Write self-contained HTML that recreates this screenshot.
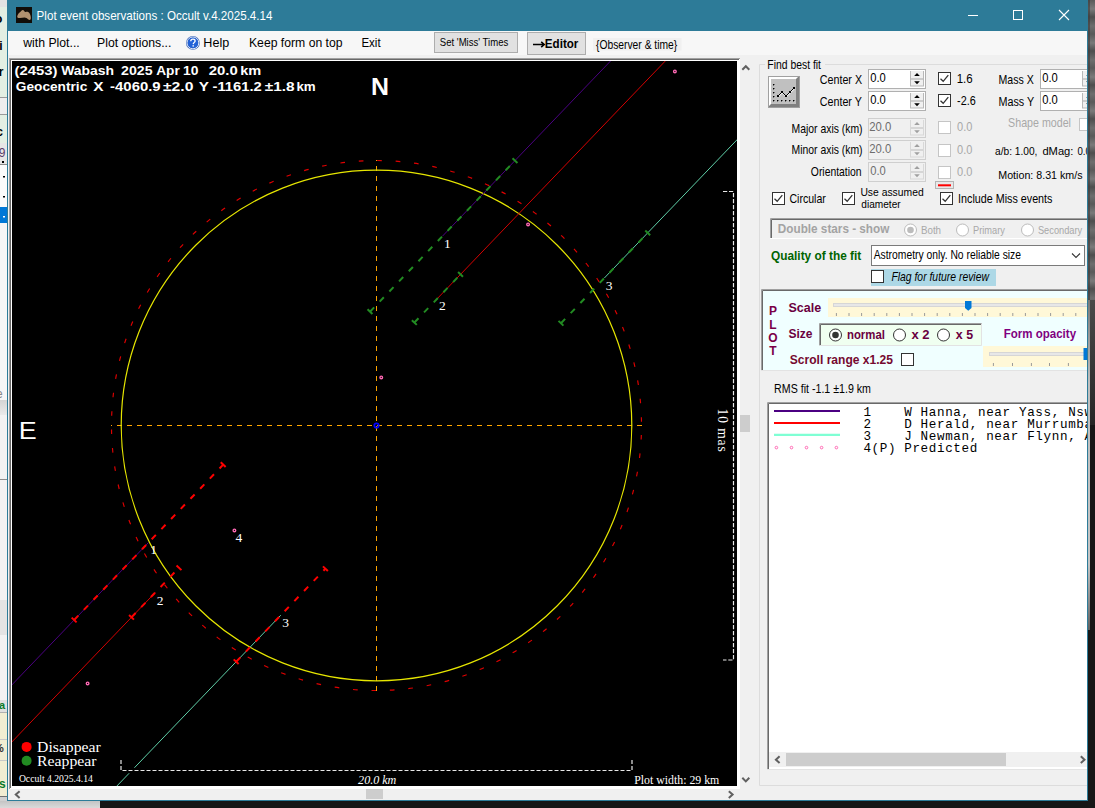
<!DOCTYPE html>
<html><head><meta charset="utf-8">
<style>
*{box-sizing:border-box}
html,body{margin:0;padding:0}
body{width:1095px;height:808px;overflow:hidden;position:relative;background:#161616;font-family:"Liberation Sans",sans-serif;font-size:12px;color:#000}
.a{position:absolute}
.t{position:absolute;white-space:nowrap;line-height:1}
.lbl{font-family:"Liberation Serif",serif;font-size:13.5px;fill:#fff}
</style></head><body>
<!-- desktop right strip -->
<div class="a" style="left:1088px;top:0;width:7px;height:300px;background:repeating-linear-gradient(180deg,#5a5a5a 0,#7a7a7a 9px,#4e4e4e 17px,#6e6e6e 26px,#5a5a5a 34px)"></div>
<div class="a" style="left:1088px;top:0;width:2px;height:300px;background:#3a3a3a;opacity:.6"></div>
<div class="a" style="left:1088px;top:300px;width:7px;height:125px;background:linear-gradient(180deg,#4a4a4a,#262626)"></div>
<div class="a" style="left:1088px;top:425px;width:7px;height:383px;background:#171717"></div>
<div class="a" style="left:1088px;top:300px;width:2px;height:330px;background:linear-gradient(180deg,#7a7a7a,#bdbdbd 25%,#c4c4c4 80%,#606060)"></div>
<!-- bottom strip -->
<div class="a" style="left:0;top:801px;width:100px;height:7px;background:linear-gradient(180deg,#c4c4c4,#dadada)"></div>
<!-- left background window strip -->
<div class="a" style="left:0;top:0;width:7px;height:801px;background:#f2f2f2"></div>
<div class="a" style="left:0;top:0;width:7px;height:7px;background:#e2e2e2"></div>
<div class="a" style="left:0;top:7px;width:7px;height:90px;background:#e3efe3"></div>
<div class="a" style="left:0;top:97px;width:7px;height:1px;background:#9a9a9a"></div>
<div class="a" style="left:0;top:98px;width:7px;height:16px;background:#eeeeee"></div>
<div class="a" style="left:0;top:114px;width:7px;height:1px;background:#9a9a9a"></div>
<div class="a" style="left:0;top:115px;width:7px;height:28px;background:#e3efe3"></div>
<div class="a" style="left:0;top:143px;width:7px;height:21px;background:#e6e6e6"></div>
<div class="a" style="left:0;top:164px;width:7px;height:1px;background:#8a8a8a"></div>
<div class="a" style="left:0;top:165px;width:7px;height:42px;background:#fbfbfb"></div>
<div class="a" style="left:0;top:207px;width:7px;height:16px;background:#0078d7"></div>
<div class="a" style="left:0;top:223px;width:7px;height:177px;background:#f6f6f6"></div>
<div class="a" style="left:0;top:400px;width:7px;height:15px;background:linear-gradient(180deg,#d4d4d4,#eaeaea)"></div>
<div class="a" style="left:0;top:479px;width:7px;height:1px;background:#8c8c8c"></div>
<div class="a" style="left:0;top:600px;width:7px;height:35px;background:#e4e4e4"></div>
<div class="a" style="left:0;top:700px;width:7px;height:12px;background:#e0e0e0"></div>
<div class="a" style="left:0;top:712px;width:7px;height:84px;background:#f1edd2"></div>
<div class="a" style="left:0;top:712px;width:7px;height:1px;background:#b0b0b0"></div>
<div class="a" style="left:0;top:739px;width:7px;height:1px;background:#c8c8c8"></div>
<div class="a" style="left:0;top:760px;width:7px;height:1px;background:#c8c8c8"></div>
<div class="a" style="left:0;top:796px;width:7px;height:1px;background:#707070"></div>
<div class="a" style="left:0;top:797px;width:7px;height:4px;background:#d0d0d0"></div>
<svg class="a" style="left:0;top:0" width="8" height="801">
<g font-family="Liberation Sans" font-weight="bold" font-size="12" fill="#000">
<text x="-5" y="23">o</text><text x="-8" y="50">bi</text><text x="-8" y="76">er</text><text x="-7" y="136">ic</text>
</g>
<text x="-8" y="157" font-family="Liberation Sans" font-size="12" fill="#5a3c6a">19</text>
<rect x="2" y="161" width="2" height="2" fill="#000"/><rect x="3" y="176" width="2" height="1.5" fill="#000"/><rect x="3" y="196" width="2" height="1.5" fill="#000"/><rect x="3" y="216" width="2" height="1.5" fill="#fff"/>
<text x="-4" y="398" font-family="Liberation Sans" font-size="12" fill="#888">e</text>
<text x="-1" y="709" font-family="Liberation Sans" font-weight="bold" font-size="11" fill="#0a7a2a">a</text>
<text x="-6" y="752" font-family="Liberation Sans" font-weight="bold" font-size="11" fill="#333">%</text>
<text x="-1" y="788" font-family="Liberation Sans" font-weight="bold" font-size="12" fill="#0a7a2a">s</text>
</svg>
<!-- window -->
<div class="a" style="left:7px;top:0;width:1081px;height:801px;background:#f0f0f0;border:1px solid #2d7c99;border-top:none"></div>
<div class="a" style="left:7px;top:0;width:1081px;height:31px;background:#2d7b98"></div>

<!-- menu bar -->
<div class="a" style="left:8px;top:31px;width:1079px;height:24px;background:#f7f7f7"></div>


<!-- plot frame -->
<div class="a" style="left:9px;top:58px;width:731px;height:731px;background:#fff;border-top:1px solid #a0a0a0;border-left:1px solid #a0a0a0"></div>
<div class="a" style="left:10px;top:59px;width:729px;height:729px;border-top:1px solid #696969;border-left:1px solid #696969"></div>
<svg class="a" style="left:0;top:0" width="1095" height="808">
<defs><clipPath id="pc"><rect x="12" y="61" width="725" height="725"/></clipPath></defs>
<rect x="12" y="61" width="725" height="725" fill="#000"/>
<g clip-path="url(#pc)">
<circle cx="376.5" cy="425.5" r="265" fill="none" stroke="#e00000" stroke-width="1.15" stroke-dasharray="4.625 13.875" stroke-dashoffset="-9.50"/>
<line x1="111" y1="425.5" x2="642" y2="425.5" stroke="#ffa500" stroke-width="1" stroke-dasharray="5 5" stroke-dashoffset="4"/>
<line x1="376.5" y1="160" x2="376.5" y2="691" stroke="#ffa500" stroke-width="1" stroke-dasharray="5 5" stroke-dashoffset="4"/>
<circle cx="376.5" cy="425.5" r="255.3" fill="none" stroke="#e6e600" stroke-width="1.2"/>
<circle cx="376.5" cy="425.5" r="2.2" fill="none" stroke="#0000ff" stroke-width="1.8"/>
<circle cx="87.60" cy="683.38" r="1.3" fill="none" stroke="#ff69b4" stroke-width="1.4"/>
<circle cx="234.42" cy="530.38" r="1.3" fill="none" stroke="#ff69b4" stroke-width="1.4"/>
<circle cx="381.24" cy="377.38" r="1.3" fill="none" stroke="#ff69b4" stroke-width="1.4"/>
<circle cx="528.06" cy="224.38" r="1.3" fill="none" stroke="#ff69b4" stroke-width="1.4"/>
<circle cx="674.88" cy="71.38" r="1.3" fill="none" stroke="#ff69b4" stroke-width="1.4"/>
<line x1="-306.89" y1="1017.06" x2="148.66" y2="542.33" stroke="#4b0082" stroke-width="1"/>
<line x1="442.47" y1="236.15" x2="939.40" y2="-281.69" stroke="#4b0082" stroke-width="1"/>
<line x1="74.13" y1="620.01" x2="223.20" y2="464.66" stroke="#ff0000" stroke-width="2" stroke-dasharray="6 8"/>
<line x1="71.67" y1="617.65" x2="76.58" y2="622.36" stroke="#ff0000" stroke-width="2"/>
<line x1="220.74" y1="462.31" x2="225.65" y2="467.01" stroke="#ff0000" stroke-width="2"/>
<line x1="369.98" y1="311.70" x2="514.97" y2="160.61" stroke="#228b22" stroke-width="2" stroke-dasharray="6 8"/>
<line x1="367.53" y1="309.34" x2="372.43" y2="314.05" stroke="#228b22" stroke-width="2"/>
<line x1="512.51" y1="158.25" x2="517.42" y2="162.96" stroke="#228b22" stroke-width="2"/>
<text x="150.16" y="554.33" class="lbl">1</text>
<text x="443.97" y="248.15" class="lbl">1</text>
<line x1="-278.39" y1="1044.41" x2="155.25" y2="592.52" stroke="#d40000" stroke-width="1"/>
<line x1="437.43" y1="298.46" x2="967.90" y2="-254.34" stroke="#d40000" stroke-width="1"/>
<line x1="131.50" y1="617.27" x2="179.00" y2="567.77" stroke="#ff0000" stroke-width="2" stroke-dasharray="6 8"/>
<line x1="129.05" y1="614.91" x2="133.95" y2="619.62" stroke="#ff0000" stroke-width="2"/>
<line x1="176.54" y1="565.42" x2="181.45" y2="570.12" stroke="#ff0000" stroke-width="2"/>
<line x1="414.34" y1="322.52" x2="460.52" y2="274.40" stroke="#228b22" stroke-width="2" stroke-dasharray="6 8"/>
<line x1="411.88" y1="320.17" x2="416.79" y2="324.88" stroke="#228b22" stroke-width="2"/>
<line x1="458.07" y1="272.04" x2="462.97" y2="276.75" stroke="#228b22" stroke-width="2"/>
<text x="156.75" y="604.52" class="lbl">2</text>
<text x="438.93" y="310.46" class="lbl">2</text>
<line x1="-201.69" y1="1118.01" x2="280.79" y2="615.21" stroke="#5fcfa8" stroke-width="1"/>
<line x1="604.34" y1="278.04" x2="1044.59" y2="-180.74" stroke="#5fcfa8" stroke-width="1"/>
<line x1="236.17" y1="661.72" x2="325.42" y2="568.71" stroke="#ff0000" stroke-width="2" stroke-dasharray="6 8"/>
<line x1="233.72" y1="659.36" x2="238.62" y2="664.07" stroke="#ff0000" stroke-width="2"/>
<line x1="322.96" y1="566.36" x2="327.87" y2="571.07" stroke="#ff0000" stroke-width="2"/>
<line x1="560.97" y1="323.25" x2="647.72" y2="232.84" stroke="#228b22" stroke-width="2" stroke-dasharray="6 8"/>
<line x1="558.51" y1="320.89" x2="563.42" y2="325.60" stroke="#228b22" stroke-width="2"/>
<line x1="645.27" y1="230.48" x2="650.17" y2="235.19" stroke="#228b22" stroke-width="2"/>
<text x="282.29" y="627.21" class="lbl">3</text>
<text x="605.84" y="290.04" class="lbl">3</text>
<text x="235.42" y="542.38" class="lbl">4</text>

</g>
<!-- right bracket -->
<path d="M723 191.5 H733.5 V660 H723" fill="none" stroke="#e8e8e8" stroke-width="1.2" stroke-dasharray="4.2 1.8"/>
<!-- scale bar -->
<path d="M121 770.5 H632" stroke="#000" stroke-width="5.5"/>
<path d="M121 760 V770.5 H632 V760" fill="none" stroke="#e8e8e8" stroke-width="1.2" stroke-dasharray="4 2"/>
<circle cx="26.6" cy="746.9" r="5" fill="#ff0000"/>
<circle cx="26.6" cy="760.7" r="5" fill="#228b22"/>
<text transform="translate(718,408.6) rotate(90) scale(1,1.1)" font-family="Liberation Serif" font-size="13.5" letter-spacing="0.9" fill="#fff">10 mas</text>

</svg>
<svg class="a" style="left:0;top:0" width="1095" height="808">
<defs><clipPath id="wc"><rect x="8" y="0" width="1079" height="800"/></clipPath></defs><g clip-path="url(#wc)">
<rect x="16" y="7" width="16" height="16" fill="#110d08"/>
<path d="M17.2,16.8 C17.3,14.8 18.5,13.2 20,12.2 C21,11.3 21.8,10.3 22.8,10.1 C23.8,10 24.2,11.2 24.8,11.8 C25.6,12.3 26.6,11.6 27.6,11.8 C29,12.2 30,13.6 30.5,15.5 C30.9,17 31,18.8 30.5,19.6 C30,20.3 29,20 28,19.3 C27,18.5 26,17.6 24.5,17.6 C23,17.6 21.5,17.9 20,18 C18.6,18.1 17.2,18 17.2,16.8 Z" fill="#b09270"/>
<text transform="translate(36.61,20.4) scale(0.8935,1)" font-family="Liberation Sans" font-weight="normal" font-style="normal" font-size="13" fill="#fff" xml:space="preserve">Plot event observations : Occult v.4.2025.4.14</text>
<line x1="968" y1="15.5" x2="978" y2="15.5" stroke="#fff" stroke-width="1"/>
<rect x="1013.5" y="10.5" width="9" height="9" fill="none" stroke="#fff" stroke-width="1"/>
<path d="M1059,10 L1069,20 M1069,10 L1059,20" fill="none" stroke="#fff" stroke-width="1.1"/>
<text transform="translate(23.20,47.3) scale(1.0222,1)" font-family="Liberation Sans" font-weight="normal" font-style="normal" font-size="12" fill="#000" xml:space="preserve">with Plot...</text>
<text transform="translate(97.08,47.3) scale(1.0225,1)" font-family="Liberation Sans" font-weight="normal" font-style="normal" font-size="12" fill="#000" xml:space="preserve">Plot options...</text>
<text transform="translate(203.35,47.3) scale(1.0478,1)" font-family="Liberation Sans" font-weight="normal" font-style="normal" font-size="12" fill="#000" xml:space="preserve">Help</text>
<text transform="translate(248.98,47.3) scale(1.0176,1)" font-family="Liberation Sans" font-weight="normal" font-style="normal" font-size="12" fill="#000" xml:space="preserve">Keep form on top</text>
<text transform="translate(361.44,47.3) scale(0.9579,1)" font-family="Liberation Sans" font-weight="normal" font-style="normal" font-size="12" fill="#000" xml:space="preserve">Exit</text>
<circle cx="192.9" cy="42.9" r="6.9" fill="#3f67b8"/>
<circle cx="192.9" cy="42.9" r="5.9" fill="none" stroke="#dce8fa" stroke-width="1"/>
<circle cx="192.9" cy="42.9" r="5.1" fill="#2262d8"/>
<path d="M190.8,41.2 C190.8,39.6 191.8,39.1 193,39.1 C194.3,39.1 195.1,39.9 195.1,40.9 C195.1,42.2 193.4,42.5 193.2,44.2" fill="none" stroke="#fff" stroke-width="1.3"/>
<rect x="192.5" y="45.2" width="1.4" height="1.4" fill="#fff"/>
<rect x="434.5" y="32.5" width="83" height="20" fill="#e1e1e1" stroke="#adadad" stroke-width="1"/>
<text transform="translate(439.83,45.8) scale(0.8692,1)" font-family="Liberation Sans" font-weight="normal" font-style="normal" font-size="11" fill="#000" xml:space="preserve">Set 'Miss' Times</text>
<rect x="527.5" y="32.5" width="58" height="22" fill="#e1e1e1" stroke="#adadad" stroke-width="1"/>
<path d="M533,44.5 H543.8 M541.2,41.8 L544.2,44.5 L541.2,47.2" fill="none" stroke="#000" stroke-width="1.6"/>
<text transform="translate(544.83,47.7) scale(0.9676,1)" font-family="Liberation Sans" font-weight="bold" font-style="normal" font-size="12" fill="#000" xml:space="preserve">Editor</text>
<rect x="593" y="38" width="88.5" height="12.5" fill="#f0f0f0"/>
<text transform="translate(596.00,49) scale(0.8589,1)" font-family="Liberation Sans" font-weight="normal" font-style="normal" font-size="12" fill="#000" xml:space="preserve">{Observer &amp; time}</text>
<path d="M765,64.5 H759.5 V785.5 H1095 M825,64.5 H1095" fill="none" stroke="#dcdcdc" stroke-width="1"/>
<text transform="translate(767.33,68.8) scale(0.8656,1)" font-family="Liberation Sans" font-weight="normal" font-style="normal" font-size="12" fill="#000" xml:space="preserve">Find best fit</text>
<rect x="768" y="76" width="32" height="32" fill="#a0a0a0"/>
<rect x="769" y="77" width="30" height="30" fill="#808080"/>
<path d="M769,77 H798 L796,79 H771 V104 L769,106 Z" fill="#ffffff"/>
<rect x="771" y="79" width="25" height="25" fill="#c0c0c0"/>
<rect x="773.5" y="84.5" width="1.5" height="1.5" fill="#fff"/>
<rect x="773" y="84" width="1.5" height="1.5" fill="#000"/>
<rect x="773.5" y="88.5" width="1.5" height="1.5" fill="#fff"/>
<rect x="773" y="88" width="1.5" height="1.5" fill="#000"/>
<rect x="773.5" y="92.5" width="1.5" height="1.5" fill="#fff"/>
<rect x="773" y="92" width="1.5" height="1.5" fill="#000"/>
<rect x="773.5" y="96.5" width="1.5" height="1.5" fill="#fff"/>
<rect x="773" y="96" width="1.5" height="1.5" fill="#000"/>
<rect x="773.5" y="100.5" width="1.5" height="1.5" fill="#fff"/>
<rect x="773" y="100" width="1.5" height="1.5" fill="#000"/>
<rect x="777.5" y="100.5" width="1.5" height="1.5" fill="#fff"/>
<rect x="777" y="100" width="1.5" height="1.5" fill="#000"/>
<rect x="781.5" y="100.5" width="1.5" height="1.5" fill="#fff"/>
<rect x="781" y="100" width="1.5" height="1.5" fill="#000"/>
<rect x="785.5" y="100.5" width="1.5" height="1.5" fill="#fff"/>
<rect x="785" y="100" width="1.5" height="1.5" fill="#000"/>
<rect x="789.5" y="100.5" width="1.5" height="1.5" fill="#fff"/>
<rect x="789" y="100" width="1.5" height="1.5" fill="#000"/>
<rect x="793.5" y="100.5" width="1.5" height="1.5" fill="#fff"/>
<rect x="793" y="100" width="1.5" height="1.5" fill="#000"/>
<path d="M778.4,96.9 L782.4,92.9 L786.4,96.9 L790.4,92.9 L794.4,88.9" fill="none" stroke="#fff" stroke-width="1"/>
<path d="M778,96 L782,92 L786,96 L790,92 L794,88" fill="none" stroke="#000" stroke-width="1"/>
<rect x="777" y="95" width="2" height="2" fill="#000"/>
<rect x="781" y="91" width="2" height="2" fill="#000"/>
<rect x="785" y="95" width="2" height="2" fill="#000"/>
<rect x="789" y="91" width="2" height="2" fill="#000"/>
<rect x="793" y="87" width="2" height="2" fill="#000"/>
<text transform="translate(819.81,83.7) scale(0.8935,1)" font-family="Liberation Sans" font-weight="normal" font-style="normal" font-size="12" fill="#000" xml:space="preserve">Center X</text>
<text transform="translate(819.81,105.9) scale(0.8935,1)" font-family="Liberation Sans" font-weight="normal" font-style="normal" font-size="12" fill="#000" xml:space="preserve">Center Y</text>
<rect x="868.5" y="69.5" width="57" height="19" fill="#fff" stroke="#b0b0b0" stroke-width="1"/>
<text transform="translate(870.20,82) scale(0.9312,1)" font-family="Liberation Sans" font-weight="normal" font-style="normal" font-size="12" fill="#000" xml:space="preserve">0.0</text>
<rect x="910" y="71" width="14" height="15" fill="#f0f0f0"/>
<line x1="910.5" y1="71" x2="910.5" y2="86.5" stroke="#b8b8b8" stroke-width="1"/>
<line x1="923.5" y1="71" x2="923.5" y2="86.5" stroke="#b8b8b8" stroke-width="1"/>
<line x1="911" y1="79" x2="923" y2="79" stroke="#c4c4c4" stroke-width="1.6"/>
<line x1="911" y1="86" x2="923" y2="86" stroke="#b8b8b8" stroke-width="1"/>
<path d="M914.2,76 L917,73 L919.8,76 Z" fill="#000"/>
<path d="M914.2,81.3 L917,84.3 L919.8,81.3 Z" fill="#000"/>
<rect x="868.5" y="91.5" width="57" height="19" fill="#fff" stroke="#b0b0b0" stroke-width="1"/>
<text transform="translate(870.20,104) scale(0.9312,1)" font-family="Liberation Sans" font-weight="normal" font-style="normal" font-size="12" fill="#000" xml:space="preserve">0.0</text>
<rect x="910" y="93" width="14" height="15" fill="#f0f0f0"/>
<line x1="910.5" y1="93" x2="910.5" y2="108.5" stroke="#b8b8b8" stroke-width="1"/>
<line x1="923.5" y1="93" x2="923.5" y2="108.5" stroke="#b8b8b8" stroke-width="1"/>
<line x1="911" y1="101" x2="923" y2="101" stroke="#c4c4c4" stroke-width="1.6"/>
<line x1="911" y1="108" x2="923" y2="108" stroke="#b8b8b8" stroke-width="1"/>
<path d="M914.2,98 L917,95 L919.8,98 Z" fill="#000"/>
<path d="M914.2,103.3 L917,106.3 L919.8,103.3 Z" fill="#000"/>
<rect x="938.5" y="72.5" width="12" height="12" fill="#fff" stroke="#333333" stroke-width="1"/>
<path d="M940.5,78.8 L943.2,81.3 L948.3,75.2" fill="none" stroke="#333" stroke-width="1.3"/>
<text transform="translate(956.64,83.4) scale(0.9600,1)" font-family="Liberation Sans" font-weight="normal" font-style="normal" font-size="12" fill="#000" xml:space="preserve">1.6</text>
<rect x="938.5" y="94.5" width="12" height="12" fill="#fff" stroke="#333333" stroke-width="1"/>
<path d="M940.5,100.8 L943.2,103.3 L948.3,97.2" fill="none" stroke="#333" stroke-width="1.3"/>
<text transform="translate(957.10,105) scale(0.9000,1)" font-family="Liberation Sans" font-weight="normal" font-style="normal" font-size="12" fill="#000" xml:space="preserve">-2.6</text>
<text transform="translate(998.52,84.2) scale(0.8821,1)" font-family="Liberation Sans" font-weight="normal" font-style="normal" font-size="12" fill="#000" xml:space="preserve">Mass X</text>
<text transform="translate(998.50,106) scale(0.8974,1)" font-family="Liberation Sans" font-weight="normal" font-style="normal" font-size="12" fill="#000" xml:space="preserve">Mass Y</text>
<rect x="1040.5" y="69.5" width="57" height="19" fill="#fff" stroke="#b0b0b0" stroke-width="1"/>
<text transform="translate(1042.20,82) scale(0.9312,1)" font-family="Liberation Sans" font-weight="normal" font-style="normal" font-size="12" fill="#000" xml:space="preserve">0.0</text>
<rect x="1082" y="71" width="14" height="15" fill="#f0f0f0"/>
<line x1="1082.5" y1="71" x2="1082.5" y2="86.5" stroke="#b8b8b8" stroke-width="1"/>
<line x1="1095.5" y1="71" x2="1095.5" y2="86.5" stroke="#b8b8b8" stroke-width="1"/>
<line x1="1083" y1="79" x2="1095" y2="79" stroke="#c4c4c4" stroke-width="1.6"/>
<line x1="1083" y1="86" x2="1095" y2="86" stroke="#b8b8b8" stroke-width="1"/>
<path d="M1086.2,76 L1089,73 L1091.8,76 Z" fill="#000"/>
<path d="M1086.2,81.3 L1089,84.3 L1091.8,81.3 Z" fill="#000"/>
<rect x="1040.5" y="91.5" width="57" height="19" fill="#fff" stroke="#b0b0b0" stroke-width="1"/>
<text transform="translate(1042.20,104) scale(0.9312,1)" font-family="Liberation Sans" font-weight="normal" font-style="normal" font-size="12" fill="#000" xml:space="preserve">0.0</text>
<rect x="1082" y="93" width="14" height="15" fill="#f0f0f0"/>
<line x1="1082.5" y1="93" x2="1082.5" y2="108.5" stroke="#b8b8b8" stroke-width="1"/>
<line x1="1095.5" y1="93" x2="1095.5" y2="108.5" stroke="#b8b8b8" stroke-width="1"/>
<line x1="1083" y1="101" x2="1095" y2="101" stroke="#c4c4c4" stroke-width="1.6"/>
<line x1="1083" y1="108" x2="1095" y2="108" stroke="#b8b8b8" stroke-width="1"/>
<path d="M1086.2,98 L1089,95 L1091.8,98 Z" fill="#000"/>
<path d="M1086.2,103.3 L1089,106.3 L1091.8,103.3 Z" fill="#000"/>
<text transform="translate(791.53,132.7) scale(0.8675,1)" font-family="Liberation Sans" font-weight="normal" font-style="normal" font-size="12" fill="#000" xml:space="preserve">Major axis (km)</text>
<text transform="translate(791.53,154.4) scale(0.8675,1)" font-family="Liberation Sans" font-weight="normal" font-style="normal" font-size="12" fill="#000" xml:space="preserve">Minor axis (km)</text>
<text transform="translate(810.80,175.8) scale(0.8655,1)" font-family="Liberation Sans" font-weight="normal" font-style="normal" font-size="12" fill="#000" xml:space="preserve">Orientation</text>
<rect x="868.5" y="118.5" width="57" height="19" fill="#f0f0f0" stroke="#cfcfcf" stroke-width="1"/>
<text transform="translate(869.25,131) scale(0.9455,1)" font-family="Liberation Sans" font-weight="normal" font-style="normal" font-size="12" fill="#6d6d6d" xml:space="preserve">20.0</text>
<rect x="910" y="120" width="14" height="15" fill="#f0f0f0"/>
<line x1="910.5" y1="120" x2="910.5" y2="135.5" stroke="#d8d8d8" stroke-width="1"/>
<line x1="923.5" y1="120" x2="923.5" y2="135.5" stroke="#d8d8d8" stroke-width="1"/>
<line x1="911" y1="128" x2="923" y2="128" stroke="#d0d0d0" stroke-width="1.6"/>
<line x1="911" y1="135" x2="923" y2="135" stroke="#d8d8d8" stroke-width="1"/>
<path d="M914.2,125 L917,122 L919.8,125 Z" fill="#a0a0a0"/>
<path d="M914.2,130.3 L917,133.3 L919.8,130.3 Z" fill="#a0a0a0"/>
<rect x="868.5" y="140.5" width="57" height="19" fill="#f0f0f0" stroke="#cfcfcf" stroke-width="1"/>
<text transform="translate(869.25,153) scale(0.9455,1)" font-family="Liberation Sans" font-weight="normal" font-style="normal" font-size="12" fill="#6d6d6d" xml:space="preserve">20.0</text>
<rect x="910" y="142" width="14" height="15" fill="#f0f0f0"/>
<line x1="910.5" y1="142" x2="910.5" y2="157.5" stroke="#d8d8d8" stroke-width="1"/>
<line x1="923.5" y1="142" x2="923.5" y2="157.5" stroke="#d8d8d8" stroke-width="1"/>
<line x1="911" y1="150" x2="923" y2="150" stroke="#d0d0d0" stroke-width="1.6"/>
<line x1="911" y1="157" x2="923" y2="157" stroke="#d8d8d8" stroke-width="1"/>
<path d="M914.2,147 L917,144 L919.8,147 Z" fill="#a0a0a0"/>
<path d="M914.2,152.3 L917,155.3 L919.8,152.3 Z" fill="#a0a0a0"/>
<rect x="868.5" y="162.5" width="57" height="19" fill="#f0f0f0" stroke="#cfcfcf" stroke-width="1"/>
<text transform="translate(870.20,175) scale(0.9312,1)" font-family="Liberation Sans" font-weight="normal" font-style="normal" font-size="12" fill="#6d6d6d" xml:space="preserve">0.0</text>
<rect x="910" y="164" width="14" height="15" fill="#f0f0f0"/>
<line x1="910.5" y1="164" x2="910.5" y2="179.5" stroke="#d8d8d8" stroke-width="1"/>
<line x1="923.5" y1="164" x2="923.5" y2="179.5" stroke="#d8d8d8" stroke-width="1"/>
<line x1="911" y1="172" x2="923" y2="172" stroke="#d0d0d0" stroke-width="1.6"/>
<line x1="911" y1="179" x2="923" y2="179" stroke="#d8d8d8" stroke-width="1"/>
<path d="M914.2,169 L917,166 L919.8,169 Z" fill="#a0a0a0"/>
<path d="M914.2,174.3 L917,177.3 L919.8,174.3 Z" fill="#a0a0a0"/>
<rect x="938.5" y="121.5" width="12" height="12" fill="#fff" stroke="#c5c5c5" stroke-width="1"/>
<text transform="translate(957.00,131.4) scale(0.9188,1)" font-family="Liberation Sans" font-weight="normal" font-style="normal" font-size="12" fill="#a8a8a8" xml:space="preserve">0.0</text>
<rect x="938.5" y="144.5" width="12" height="12" fill="#fff" stroke="#c5c5c5" stroke-width="1"/>
<text transform="translate(957.00,153.6) scale(0.9188,1)" font-family="Liberation Sans" font-weight="normal" font-style="normal" font-size="12" fill="#a8a8a8" xml:space="preserve">0.0</text>
<rect x="938.5" y="166.5" width="12" height="12" fill="#fff" stroke="#c5c5c5" stroke-width="1"/>
<text transform="translate(957.00,175.8) scale(0.9188,1)" font-family="Liberation Sans" font-weight="normal" font-style="normal" font-size="12" fill="#a8a8a8" xml:space="preserve">0.0</text>
<text transform="translate(1008.11,127.3) scale(0.8899,1)" font-family="Liberation Sans" font-weight="normal" font-style="normal" font-size="12" fill="#a8a8a8" xml:space="preserve">Shape model</text>
<rect x="1079.5" y="118.5" width="12" height="12" fill="#fff" stroke="#c5c5c5" stroke-width="1"/>
<text transform="translate(995.00,154.7) scale(0.8851,1)" font-family="Liberation Sans" font-weight="normal" font-style="normal" font-size="11.5" fill="#000" xml:space="preserve">a/b: 1.00,</text>
<text transform="translate(1042.40,154.7) scale(0.9710,1)" font-family="Liberation Sans" font-weight="normal" font-style="normal" font-size="11.5" fill="#000" xml:space="preserve">dMag:</text>
<text transform="translate(1077.50,154.7) scale(0.8409,1)" font-family="Liberation Sans" font-weight="normal" font-style="normal" font-size="11.5" fill="#000" xml:space="preserve">0.00</text>
<text transform="translate(998.27,179) scale(0.9292,1)" font-family="Liberation Sans" font-weight="normal" font-style="normal" font-size="11.5" fill="#000" xml:space="preserve">Motion: 8.31 km/s</text>
<rect x="935.5" y="181.5" width="18" height="7" fill="#e8e8e8" stroke="#b4b4b4" stroke-width="1"/>
<line x1="938" y1="185.3" x2="951" y2="185.3" stroke="#ff0000" stroke-width="2"/>
<rect x="772.5" y="192.5" width="12" height="12" fill="#fff" stroke="#333333" stroke-width="1"/>
<path d="M774.5,198.8 L777.2,201.3 L782.3,195.2" fill="none" stroke="#333" stroke-width="1.3"/>
<text transform="translate(789.42,202.9) scale(0.8825,1)" font-family="Liberation Sans" font-weight="normal" font-style="normal" font-size="12" fill="#000" xml:space="preserve">Circular</text>
<rect x="842.5" y="192.5" width="12" height="12" fill="#fff" stroke="#333333" stroke-width="1"/>
<path d="M844.5,198.8 L847.2,201.3 L852.3,195.2" fill="none" stroke="#333" stroke-width="1.3"/>
<text transform="translate(860.40,195.8) scale(0.9000,1)" font-family="Liberation Sans" font-weight="normal" font-style="normal" font-size="11.5" fill="#000" xml:space="preserve">Use assumed</text>
<text transform="translate(861.30,208.1) scale(0.8800,1)" font-family="Liberation Sans" font-weight="normal" font-style="normal" font-size="11.5" fill="#000" xml:space="preserve">diameter</text>
<rect x="940.5" y="192.5" width="12" height="12" fill="#fff" stroke="#333333" stroke-width="1"/>
<path d="M942.5,198.8 L945.2,201.3 L950.3,195.2" fill="none" stroke="#333" stroke-width="1.3"/>
<text transform="translate(958.10,202.9) scale(0.8971,1)" font-family="Liberation Sans" font-weight="normal" font-style="normal" font-size="12" fill="#000" xml:space="preserve">Include Miss events</text>
<rect x="770" y="218" width="330" height="21" fill="#f0f0f0"/>
<path d="M770.5,238.5 V218.5 H1100" fill="none" stroke="#a0a0a0" stroke-width="1"/>
<path d="M771.5,238 V219.5 H1100" fill="none" stroke="#696969" stroke-width="1"/>
<line x1="770" y1="238.5" x2="1100" y2="238.5" stroke="#ffffff" stroke-width="1"/>
<text transform="translate(777.82,232.7) scale(0.9796,1)" font-family="Liberation Sans" font-weight="bold" font-style="normal" font-size="12" fill="#a3a3a3" xml:space="preserve">Double stars - show</text>
<circle cx="910.5" cy="230.0" r="6" fill="#fff" stroke="#bcbcbc" stroke-width="1"/>
<circle cx="910.5" cy="230.0" r="3.3" fill="#bcbcbc"/>
<text transform="translate(920.91,233.7) scale(0.8905,1)" font-family="Liberation Sans" font-weight="normal" font-style="normal" font-size="11" fill="#a8a8a8" xml:space="preserve">Both</text>
<circle cx="962.5" cy="230.0" r="6" fill="#fff" stroke="#bcbcbc" stroke-width="1"/>
<text transform="translate(973.06,233.7) scale(0.8405,1)" font-family="Liberation Sans" font-weight="normal" font-style="normal" font-size="11" fill="#a8a8a8" xml:space="preserve">Primary</text>
<circle cx="1027.5" cy="230.0" r="6" fill="#fff" stroke="#bcbcbc" stroke-width="1"/>
<text transform="translate(1037.96,233.7) scale(0.8404,1)" font-family="Liberation Sans" font-weight="normal" font-style="normal" font-size="11" fill="#a8a8a8" xml:space="preserve">Secondary</text>
<text transform="translate(771.00,259.6) scale(0.9890,1)" font-family="Liberation Sans" font-weight="bold" font-style="normal" font-size="12" fill="#006400" xml:space="preserve">Quality of the fit</text>
<rect x="871.5" y="245.5" width="213" height="20" fill="#fff" stroke="#7a7a7a" stroke-width="1"/>
<text transform="translate(873.70,259) scale(0.8614,1)" font-family="Liberation Sans" font-weight="normal" font-style="normal" font-size="12" fill="#000" xml:space="preserve">Astrometry only. No reliable size</text>
<path d="M1072,253.5 L1076,257.5 L1080,253.5" fill="none" stroke="#333" stroke-width="1.1"/>
<rect x="871" y="269" width="125" height="17" fill="#add8e6"/>
<rect x="871.5" y="270.5" width="12" height="12" fill="#fff" stroke="#333333" stroke-width="1"/>
<text transform="translate(891.40,281) scale(0.8655,1)" font-family="Liberation Sans" font-weight="normal" font-style="italic" font-size="12" fill="#000" xml:space="preserve">Flag for future review</text>
<rect x="761" y="289.5" width="340" height="81" fill="#f0ffff"/>
<path d="M761.5,370.5 V289.5 H1100" fill="none" stroke="#a0a0a0" stroke-width="1"/>
<path d="M762.5,370 V290.5 H1100" fill="none" stroke="#696969" stroke-width="1"/>
<line x1="761" y1="370.5" x2="1100" y2="370.5" stroke="#e3e3e3" stroke-width="1"/>
<text x="773" y="315.4" text-anchor="middle" font-family="Liberation Sans" font-weight="bold" font-size="12" fill="#7a0046">P</text>
<text x="773" y="328.6" text-anchor="middle" font-family="Liberation Sans" font-weight="bold" font-size="12" fill="#7a0046">L</text>
<text x="773" y="341.7" text-anchor="middle" font-family="Liberation Sans" font-weight="bold" font-size="12" fill="#7a0046">O</text>
<text x="773" y="354.9" text-anchor="middle" font-family="Liberation Sans" font-weight="bold" font-size="12" fill="#7a0046">T</text>
<text transform="translate(788.46,311.6) scale(1.0433,1)" font-family="Liberation Sans" font-weight="bold" font-style="normal" font-size="12" fill="#6a0040" xml:space="preserve">Scale</text>
<rect x="828" y="298" width="270" height="19" fill="#fff8d8"/>
<rect x="833.5" y="303.5" width="260" height="3" fill="#e7e7e7" stroke="#d6d6d6" stroke-width="1"/>
<line x1="836.4" y1="313" x2="836.4" y2="316" stroke="#9a9a9a" stroke-width="1"/>
<line x1="849.0" y1="313" x2="849.0" y2="316" stroke="#9a9a9a" stroke-width="1"/>
<line x1="861.6" y1="313" x2="861.6" y2="316" stroke="#9a9a9a" stroke-width="1"/>
<line x1="874.1999999999999" y1="313" x2="874.1999999999999" y2="316" stroke="#9a9a9a" stroke-width="1"/>
<line x1="886.8" y1="313" x2="886.8" y2="316" stroke="#9a9a9a" stroke-width="1"/>
<line x1="899.4" y1="313" x2="899.4" y2="316" stroke="#9a9a9a" stroke-width="1"/>
<line x1="912.0" y1="313" x2="912.0" y2="316" stroke="#9a9a9a" stroke-width="1"/>
<line x1="924.6" y1="313" x2="924.6" y2="316" stroke="#9a9a9a" stroke-width="1"/>
<line x1="937.1999999999999" y1="313" x2="937.1999999999999" y2="316" stroke="#9a9a9a" stroke-width="1"/>
<line x1="949.8" y1="313" x2="949.8" y2="316" stroke="#9a9a9a" stroke-width="1"/>
<line x1="962.4" y1="313" x2="962.4" y2="316" stroke="#9a9a9a" stroke-width="1"/>
<line x1="975.0" y1="313" x2="975.0" y2="316" stroke="#9a9a9a" stroke-width="1"/>
<line x1="987.5999999999999" y1="313" x2="987.5999999999999" y2="316" stroke="#9a9a9a" stroke-width="1"/>
<line x1="1000.1999999999999" y1="313" x2="1000.1999999999999" y2="316" stroke="#9a9a9a" stroke-width="1"/>
<line x1="1012.8" y1="313" x2="1012.8" y2="316" stroke="#9a9a9a" stroke-width="1"/>
<line x1="1025.4" y1="313" x2="1025.4" y2="316" stroke="#9a9a9a" stroke-width="1"/>
<line x1="1038.0" y1="313" x2="1038.0" y2="316" stroke="#9a9a9a" stroke-width="1"/>
<line x1="1050.6" y1="313" x2="1050.6" y2="316" stroke="#9a9a9a" stroke-width="1"/>
<line x1="1063.2" y1="313" x2="1063.2" y2="316" stroke="#9a9a9a" stroke-width="1"/>
<line x1="1075.8" y1="313" x2="1075.8" y2="316" stroke="#9a9a9a" stroke-width="1"/>
<path d="M965,301 H971.5 V308 L968.25,310.8 L965,308 Z" fill="#0078d7"/>
<text transform="translate(788.50,337.9)" font-family="Liberation Sans" font-weight="bold" font-style="normal" font-size="12" fill="#6a0040" xml:space="preserve">Size</text>
<rect x="819" y="323.5" width="163" height="22" fill="#f0fff0"/>
<path d="M819.5,345.5 V323.5 H982" fill="none" stroke="#a0a0a0" stroke-width="1"/>
<path d="M820.5,345 V324.5 H981" fill="none" stroke="#696969" stroke-width="1"/>
<path d="M819.5,345.5 H981.5 V323.5" fill="none" stroke="#e3e3e3" stroke-width="1"/>
<circle cx="835.5" cy="335.0" r="6" fill="#fff" stroke="#333" stroke-width="1"/>
<circle cx="835.5" cy="335.0" r="3.3" fill="#333"/>
<text transform="translate(846.95,338.5) scale(0.9500,1)" font-family="Liberation Sans" font-weight="bold" font-style="normal" font-size="12" fill="#6a0040" xml:space="preserve">normal</text>
<circle cx="899.5" cy="335.0" r="6" fill="#fff" stroke="#333" stroke-width="1"/>
<text transform="translate(911.50,338.5) scale(1.0875,1)" font-family="Liberation Sans" font-weight="bold" font-style="normal" font-size="12" fill="#6a0040" xml:space="preserve">x 2</text>
<circle cx="943.5" cy="335.0" r="6" fill="#fff" stroke="#333" stroke-width="1"/>
<text transform="translate(955.80,338.5) scale(1.0353,1)" font-family="Liberation Sans" font-weight="bold" font-style="normal" font-size="12" fill="#6a0040" xml:space="preserve">x 5</text>
<text transform="translate(1003.64,338.4) scale(0.9622,1)" font-family="Liberation Sans" font-weight="bold" font-style="normal" font-size="12" fill="#800080" xml:space="preserve">Form opacity</text>
<rect x="983" y="346" width="120" height="21" fill="#fff8d8"/>
<rect x="989.5" y="352.5" width="100" height="3" fill="#e7e7e7" stroke="#d6d6d6" stroke-width="1"/>
<line x1="993.4" y1="363" x2="993.4" y2="366" stroke="#9a9a9a" stroke-width="1"/>
<line x1="1012.5" y1="363" x2="1012.5" y2="366" stroke="#9a9a9a" stroke-width="1"/>
<line x1="1031.4" y1="363" x2="1031.4" y2="366" stroke="#9a9a9a" stroke-width="1"/>
<line x1="1049.5" y1="363" x2="1049.5" y2="366" stroke="#9a9a9a" stroke-width="1"/>
<line x1="1068.4" y1="363" x2="1068.4" y2="366" stroke="#9a9a9a" stroke-width="1"/>
<path d="M1083.5,348 H1090 V360 H1083.5 Z" fill="#0078d7"/>
<text transform="translate(789.79,363.9) scale(1.0059,1)" font-family="Liberation Sans" font-weight="bold" font-style="normal" font-size="12" fill="#750a30" xml:space="preserve">Scroll range x1.25</text>
<rect x="901.5" y="353.5" width="12" height="12" fill="#fff" stroke="#333333" stroke-width="1"/>
<text transform="translate(774.11,392.7) scale(0.8880,1)" font-family="Liberation Sans" font-weight="normal" font-style="normal" font-size="12" fill="#000" xml:space="preserve">RMS fit -1.1 ±1.9 km</text>
<rect x="767" y="402" width="340" height="368" fill="#fff"/>
<path d="M767.5,769.5 V402.5 H1100" fill="none" stroke="#a0a0a0" stroke-width="1"/>
<path d="M768.5,769 V403.5 H1100" fill="none" stroke="#696969" stroke-width="1"/>
<line x1="767" y1="769.5" x2="1100" y2="769.5" stroke="#e3e3e3" stroke-width="1"/>
<line x1="774" y1="411" x2="840" y2="411" stroke="#4b0082" stroke-width="2.2"/>
<line x1="774" y1="423" x2="840" y2="423" stroke="#ff0000" stroke-width="2.2"/>
<line x1="774" y1="434.8" x2="840" y2="434.8" stroke="#7fffd4" stroke-width="2.2"/>
<circle cx="776.4" cy="447.6" r="1.3" fill="none" stroke="#ff69b4" stroke-width="1"/>
<circle cx="791.5" cy="447.6" r="1.3" fill="none" stroke="#ff69b4" stroke-width="1"/>
<circle cx="806.5" cy="447.6" r="1.3" fill="none" stroke="#ff69b4" stroke-width="1"/>
<circle cx="821.6" cy="447.6" r="1.3" fill="none" stroke="#ff69b4" stroke-width="1"/>
<circle cx="836.4" cy="447.6" r="1.3" fill="none" stroke="#ff69b4" stroke-width="1"/>
<text x="863.4" y="416.00" font-family="Liberation Mono" font-size="12.6" letter-spacing="0.64" fill="#000" xml:space="preserve">1</text>
<text x="904.2" y="416.00" font-family="Liberation Mono" font-size="12.6" letter-spacing="0.64" fill="#000" xml:space="preserve">W Hanna, near Yass, Nsw</text>
<text x="863.4" y="428.07" font-family="Liberation Mono" font-size="12.6" letter-spacing="0.64" fill="#000" xml:space="preserve">2</text>
<text x="904.2" y="428.07" font-family="Liberation Mono" font-size="12.6" letter-spacing="0.64" fill="#000" xml:space="preserve">D Herald, near Murrumbateman</text>
<text x="863.4" y="440.14" font-family="Liberation Mono" font-size="12.6" letter-spacing="0.64" fill="#000" xml:space="preserve">3</text>
<text x="904.2" y="440.14" font-family="Liberation Mono" font-size="12.6" letter-spacing="0.64" fill="#000" xml:space="preserve">J Newman, near Flynn, ACT</text>
<text x="863.4" y="452.21" font-family="Liberation Mono" font-size="12.6" letter-spacing="0.64" fill="#000" xml:space="preserve">4(P)</text>
<text x="904.2" y="452.21" font-family="Liberation Mono" font-size="12.6" letter-spacing="0.64" fill="#000" xml:space="preserve">Predicted</text>
<rect x="769" y="752" width="330" height="15" fill="#f0f0f0"/>
<rect x="786" y="753" width="220" height="13" fill="#cdcdcd"/>
<path d="M779.6,756.3 L775.9,759.7 L779.6,763.1" fill="none" stroke="#606060" stroke-width="2"/>
<path d="M1080.8,756.3 L1084.5,759.7 L1080.8,763.1" fill="none" stroke="#606060" stroke-width="2"/>
<text transform="translate(14.50,74.9) scale(1.1026,1)" font-family="Liberation Sans" font-weight="bold" font-style="normal" font-size="13.5" fill="#fff" xml:space="preserve">(2453)</text>
<text transform="translate(61.20,74.9) scale(1.0314,1)" font-family="Liberation Sans" font-weight="bold" font-style="normal" font-size="13.5" fill="#fff" xml:space="preserve">Wabash</text>
<text transform="translate(121.00,74.9) scale(1.0500,1)" font-family="Liberation Sans" font-weight="bold" font-style="normal" font-size="13.5" fill="#fff" xml:space="preserve">2025</text>
<text transform="translate(156.20,74.9) scale(1.0130,1)" font-family="Liberation Sans" font-weight="bold" font-style="normal" font-size="13.5" fill="#fff" xml:space="preserve">Apr</text>
<text transform="translate(182.97,74.9) scale(1.0286,1)" font-family="Liberation Sans" font-weight="bold" font-style="normal" font-size="13.5" fill="#fff" xml:space="preserve">10</text>
<text transform="translate(208.70,74.9) scale(1.1038,1)" font-family="Liberation Sans" font-weight="bold" font-style="normal" font-size="13.5" fill="#fff" xml:space="preserve">20.0</text>
<text transform="translate(240.22,74.9) scale(1.0778,1)" font-family="Liberation Sans" font-weight="bold" font-style="normal" font-size="13.5" fill="#fff" xml:space="preserve">km</text>
<text transform="translate(15.80,90.8) scale(1.0143,1)" font-family="Liberation Sans" font-weight="bold" font-style="normal" font-size="13.5" fill="#fff" xml:space="preserve">Geocentric</text>
<text transform="translate(93.30,90.8) scale(1.1444,1)" font-family="Liberation Sans" font-weight="bold" font-style="normal" font-size="13.5" fill="#fff" xml:space="preserve">X</text>
<text transform="translate(110.10,90.8) scale(1.1044,1)" font-family="Liberation Sans" font-weight="bold" font-style="normal" font-size="13.5" fill="#fff" xml:space="preserve">-4060.9</text>
<text transform="translate(162.90,90.8) scale(1.1654,1)" font-family="Liberation Sans" font-weight="bold" font-style="normal" font-size="13.5" fill="#fff" xml:space="preserve">±2.0</text>
<text transform="translate(198.70,90.8) scale(1.1333,1)" font-family="Liberation Sans" font-weight="bold" font-style="normal" font-size="13.5" fill="#fff" xml:space="preserve">Y</text>
<text transform="translate(212.50,90.8) scale(1.0956,1)" font-family="Liberation Sans" font-weight="bold" font-style="normal" font-size="13.5" fill="#fff" xml:space="preserve">-1161.2</text>
<text transform="translate(264.70,90.8) scale(1.1423,1)" font-family="Liberation Sans" font-weight="bold" font-style="normal" font-size="13.5" fill="#fff" xml:space="preserve">±1.8</text>
<text transform="translate(296.41,90.8) scale(0.9889,1)" font-family="Liberation Sans" font-weight="bold" font-style="normal" font-size="13.5" fill="#fff" xml:space="preserve">km</text>
<text transform="translate(371.04,95) scale(1.0600,1)" font-family="Liberation Sans" font-weight="bold" font-style="normal" font-size="23.5" fill="#fff" xml:space="preserve">N</text>
<text transform="translate(18.81,439) scale(1.1462,1)" font-family="Liberation Sans" font-weight="normal" font-style="normal" font-size="23.5" fill="#fff" xml:space="preserve">E</text>
<text transform="translate(358.10,783.7) scale(0.9667,1)" font-family="Liberation Serif" font-weight="normal" font-style="italic" font-size="12.5" fill="#fff" xml:space="preserve">20.0 km</text>
<text transform="translate(634.25,783.6) scale(0.9472,1)" font-family="Liberation Serif" font-weight="normal" font-style="normal" font-size="12.5" fill="#fff" xml:space="preserve">Plot width: 29 km</text>
<text transform="translate(37.05,751.8) scale(1.0483,1)" font-family="Liberation Serif" font-weight="normal" font-style="normal" font-size="15" fill="#fff" xml:space="preserve">Disappear</text>
<text transform="translate(37.05,765.6) scale(1.0518,1)" font-family="Liberation Serif" font-weight="normal" font-style="normal" font-size="15" fill="#fff" xml:space="preserve">Reappear</text>
<text transform="translate(18.90,782) scale(0.9658,1)" font-family="Liberation Serif" font-weight="normal" font-style="normal" font-size="10" fill="#fff" xml:space="preserve">Occult 4.2025.4.14</text>
<rect x="740" y="61" width="15" height="725" fill="#f0f0f0"/>
<path d="M742.3,69.8 L745.8,66.2 L749.3,69.8" fill="none" stroke="#606060" stroke-width="2"/>
<path d="M742.3,777.8 L745.8,781.4 L749.3,777.8" fill="none" stroke="#606060" stroke-width="2"/>
<rect x="740" y="415" width="10" height="17" fill="#cdcdcd"/>
<rect x="12" y="789" width="725" height="10" fill="#f0f0f0"/>
<rect x="366" y="789" width="17" height="10" fill="#cdcdcd"/>
<path d="M19.6,791.3 L15.8,794.6 L19.6,797.9" fill="none" stroke="#606060" stroke-width="2"/>
<path d="M728.8,791.3 L732.6,794.6 L728.8,797.9" fill="none" stroke="#606060" stroke-width="2"/>
</g></svg>

</body></html>
